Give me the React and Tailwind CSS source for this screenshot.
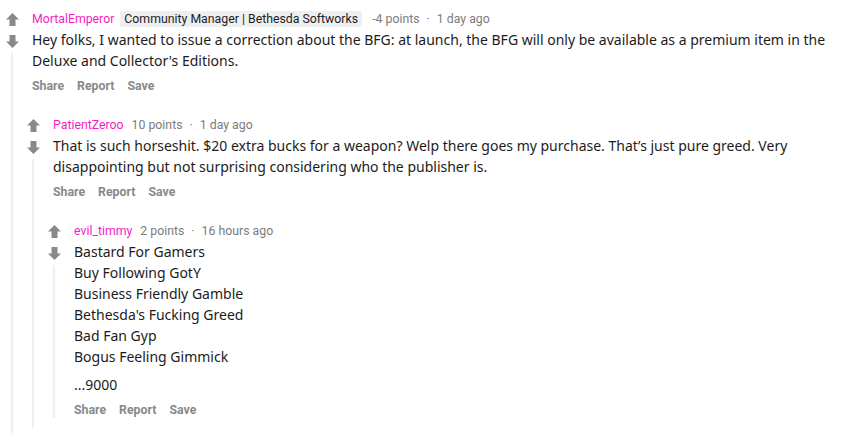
import React from "react";

const Up = () => (
  <svg width="13" height="13" viewBox="0 0 13 13">
    <polygon points="6.5,0 13,6.5 9.5,6.5 9.5,13 3.5,13 3.5,6.5 0,6.5" fill="#878a8c" />
  </svg>
);
const Down = () => (
  <svg width="13" height="13" viewBox="0 0 13 13">
    <polygon points="6.5,13 13,6.5 9.5,6.5 9.5,0 3.5,0 3.5,6.5 0,6.5" fill="#878a8c" />
  </svg>
);

const META = { fontFamily: 'Roboto, "Noto Sans", sans-serif' };

function Comment({ user, flair, points, time, children, body, pt }) {
  return (
    <div className={`flex pb-[10px] ${pt}`}>
      <div className="flex w-[24px] shrink-0 flex-col items-center">
        <div className="flex h-[16px] items-center justify-center">
          <Up />
        </div>
        <div className="mt-[6px] flex h-[16px] items-center justify-center">
          <Down />
        </div>
        <div className="mt-[4px] w-[2px] flex-1 bg-[#edeff1]" />
      </div>
      <div className="ml-[8px] min-w-0 flex-1">
        <div className="flex h-[16px] items-center text-[12.3px] leading-[16px] text-[#7c7c7c]" style={META}>
          <span className="text-[#f21ec4]">{user}</span>
          {flair && (
            <span className="ml-[6px] rounded-[2px] bg-[#edeff1] px-[4px] text-[#1c1c1c]">{flair}</span>
          )}
          <span className={flair ? "ml-[10px]" : "ml-[8px]"}>{points}</span>
          <span className="mx-[7px]">·</span>
          <span>{time}</span>
        </div>
        <div className="mt-[2px] text-[14px] leading-[21px] text-[#1c1c1c]">{body}</div>
        <div
          className="mt-[7px] flex h-[16px] items-center gap-[13px] text-[12.3px] font-bold leading-[16px] text-[#878a8c]"
          style={META}
        >
          <span>Share</span>
          <span>Report</span>
          <span>Save</span>
        </div>
        {children && <div className="ml-[-11px]">{children}</div>}
      </div>
    </div>
  );
}

export default function App() {
  return (
    <div className="h-[433px] overflow-hidden bg-white pr-[20px]" style={{ fontFamily: '"Noto Sans", "Open Sans", sans-serif' }}>
      <Comment
        pt="pt-[11px]"
        user="MortalEmperor"
        flair="Community Manager | Bethesda Softworks"
        points="-4 points"
        time="1 day ago"
        body={
          <p>
            Hey folks, I wanted to issue a correction about the BFG: at launch, the BFG will only be available as a premium item in the Deluxe and Collector's Editions.
          </p>
        }
      >
        <Comment
          pt="pt-[23px]"
          user="PatientZeroo"
          points="10 points"
          time="1 day ago"
          body={
            <p>
              That is such horseshit. $20 extra bucks for a weapon? Welp there goes my purchase. That’s just pure greed. Very disappointing but not surprising considering who the publisher is.
            </p>
          }
        >
          <Comment
            pt="pt-[23px]"
            user="evil_timmy"
            points="2 points"
            time="16 hours ago"
            body={
              <>
                <p>
                  Bastard For Gamers
                  <br />
                  Buy Following GotY
                  <br />
                  Business Friendly Gamble
                  <br />
                  Bethesda's Fucking Greed
                  <br />
                  Bad Fan Gyp
                  <br />
                  Bogus Feeling Gimmick
                </p>
                <p className="mt-[7px]">...9000</p>
              </>
            }
          />
        </Comment>
      </Comment>
    </div>
  );
}
